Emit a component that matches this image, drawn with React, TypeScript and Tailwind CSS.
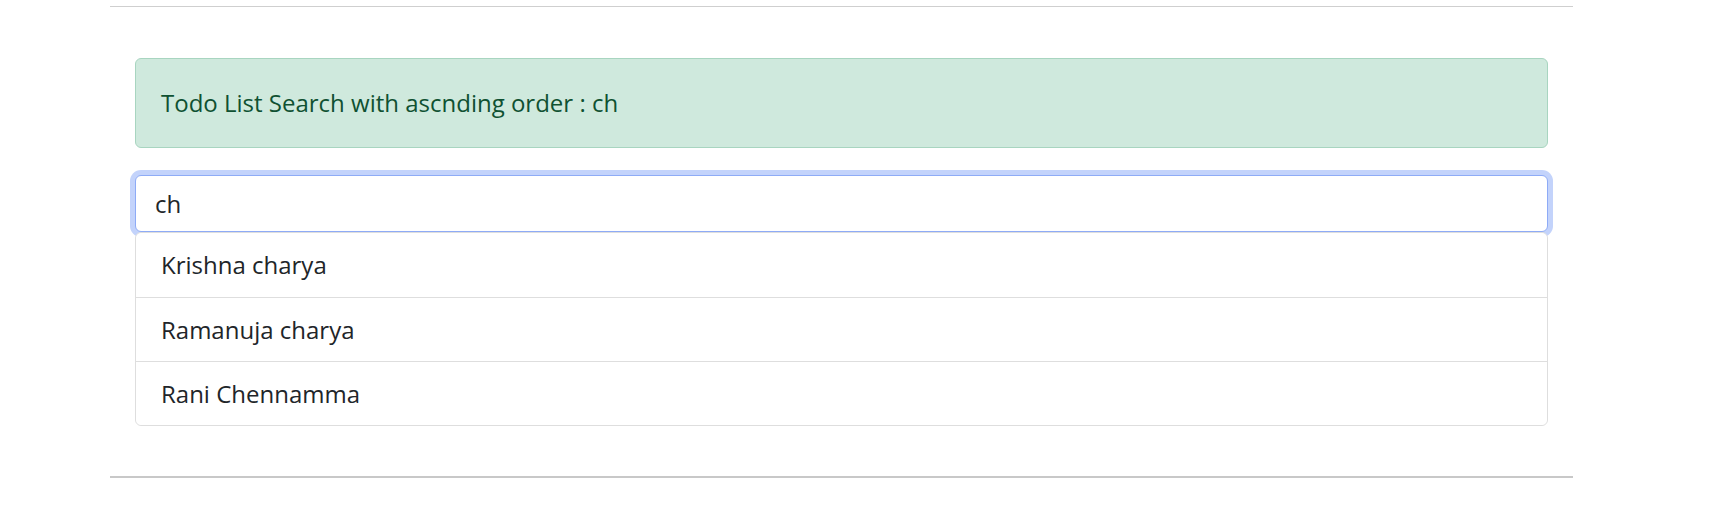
import React from "react";

export default function App() {
  const items = ["Krishna charya", "Ramanuja charya", "Rani Chennamma"];
  return (
    <div
      className="w-[1710px] h-[506px] bg-white overflow-hidden"
      style={{ fontFamily: '"Open Sans", "Noto Sans", sans-serif' }}
    >
      <div className="ml-[110px] w-[1463px] pt-[6px]">
        <hr className="border-0 border-t border-[#cfcfcf]" />
        <div className="px-[25px] pt-[51px]">
          <div className="rounded-[6px] border border-[#a8d5c0] bg-[#cfe9dd] px-[25px] py-[26px] text-[24px] leading-[36px] text-[#0f5132]">
            Todo List Search with ascnding order : ch
          </div>
          <div className="mt-[27px]">
            <input
              readOnly
              value="ch"
              className="block w-full h-[57px] rounded-[6px] border border-[#8eabf6] bg-white px-[19px] text-[24px] leading-[36px] text-[#212529] outline-none shadow-[0_0_0_5px_#c3d3fb]"
              style={{ fontFamily: '"Open Sans", "Noto Sans", sans-serif' }}
            />
            <ul className="relative rounded-[6px] border border-[#dedede] bg-white">
              {items.map((t, i) => (
                <li
                  key={t}
                  className={
                    "relative bg-white h-[64px] flex items-center px-[25px] text-[24px] leading-[36px] text-[#212529] " +
                    (i > 0 ? "border-t border-[#dedede] " : "rounded-t-[6px] ") +
                    (i === items.length - 1 ? "rounded-b-[6px] h-[63px]" : "")
                  }
                >
                  {t}
                </li>
              ))}
            </ul>
          </div>
        </div>
        <hr className="mt-[50px] border-0 border-t-2 border-[#c8c8c8]" />
      </div>
    </div>
  );
}
